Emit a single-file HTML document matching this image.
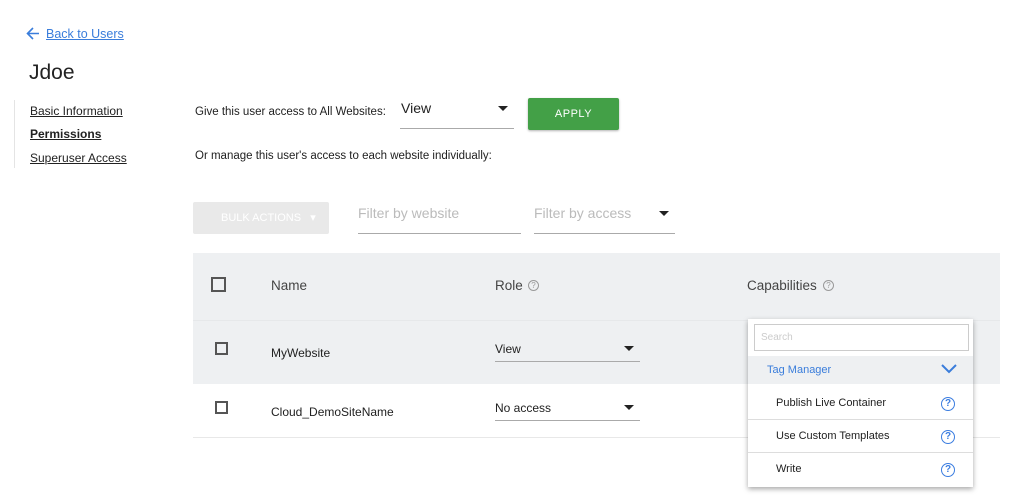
<!DOCTYPE html>
<html><head><style>
*{margin:0;padding:0;box-sizing:border-box}
body{width:1024px;height:499px;background:#fff;font-family:"Liberation Sans",sans-serif;color:#212121;position:relative;overflow:hidden;font-size:12px}
.a{position:absolute;white-space:nowrap}
.u{text-decoration:underline}
.tri{position:absolute;width:0;height:0;border-left:5px solid transparent;border-right:5px solid transparent;border-top:5px solid #222}
.cb{position:absolute;width:13px;height:13px;border:2px solid #555}
.q{position:absolute;width:14px;height:14px;border:1.5px solid #3b7de0;border-radius:50%;color:#3b7de0;font-size:10px;font-weight:bold;text-align:center;line-height:11px}
.qg{position:absolute;width:11px;height:11px;border:1px solid #999;border-radius:50%;color:#999;font-size:8px;text-align:center;line-height:9px}
</style></head><body>
<svg class="a" style="left:26px;top:27px" width="14" height="13" viewBox="0 0 14 13"><path d="M7 1L1.5 6.5L7 12M1.5 6.5H13" stroke="#3a7ddb" stroke-width="1.6" fill="none"/></svg>
<div class="a u" style="left:46px;top:27px;font-size:12.5px;color:#3a7ddb">Back to Users</div>
<div class="a" style="left:29px;top:61px;font-size:21px;color:#222">Jdoe</div>
<div class="a" style="left:14px;top:100px;width:1px;height:68px;background:#e4e4e4"></div>
<div class="a u" style="left:30px;top:104px">Basic Information</div>
<div class="a u" style="left:30px;top:127px;font-weight:bold">Permissions</div>
<div class="a u" style="left:30px;top:151px">Superuser Access</div>
<div class="a" style="left:195px;top:106px;font-size:11.5px">Give this user access to All Websites:</div>
<div class="a" style="left:401px;top:100px;font-size:14px">View</div>
<div class="tri" style="left:498px;top:106px"></div>
<div class="a" style="left:400px;top:128px;width:114px;height:1px;background:#aaa"></div>
<div class="a" style="left:528px;top:98px;width:91px;height:32px;background:#43a047;border-radius:2px;box-shadow:0 1px 2px rgba(0,0,0,.3);color:#fff;font-size:11px;text-align:center;line-height:32px;letter-spacing:.5px">APPLY</div>
<div class="a" style="left:195px;top:150px;font-size:11.5px">Or manage this user's access to each website individually:</div>
<div class="a" style="left:193px;top:202px;width:136px;height:32px;background:#e9e9e9;border-radius:2px;color:#fff;font-size:11px;line-height:32px;padding-left:28px">BULK ACTIONS &nbsp;&nbsp;▾</div>
<div class="a" style="left:358px;top:205px;font-size:14px;color:#bbb">Filter by website</div>
<div class="a" style="left:358px;top:233px;width:163px;height:1px;background:#aaa"></div>
<div class="a" style="left:534px;top:205px;font-size:14px;color:#bbb">Filter by access</div>
<div class="tri" style="left:659px;top:211px"></div>
<div class="a" style="left:534px;top:233px;width:141px;height:1px;background:#aaa"></div>
<div class="a" style="left:193px;top:253px;width:807px;height:131px;background:#eef0f2"></div>
<div class="a" style="left:193px;top:320px;width:807px;height:1px;background:#e6e8ea"></div>
<div class="a" style="left:193px;top:437px;width:807px;height:1px;background:#e8e8e8"></div>
<div class="cb" style="left:211px;top:277px;width:15px;height:15px"></div>
<div class="a" style="left:271px;top:278px;font-size:13.5px;color:#444">Name</div>
<div class="a" style="left:495px;top:278px;font-size:13.5px;color:#444">Role</div>
<div class="qg" style="left:528px;top:280px">?</div>
<div class="a" style="left:747px;top:278px;font-size:13.5px;color:#444">Capabilities</div>
<div class="qg" style="left:823px;top:280px">?</div>
<div class="cb" style="left:215px;top:342px"></div>
<div class="a" style="left:271px;top:346px">MyWebsite</div>
<div class="a" style="left:495px;top:342px">View</div>
<div class="tri" style="left:624px;top:346px"></div>
<div class="a" style="left:495px;top:361px;width:145px;height:1px;background:#aaa"></div>
<div class="cb" style="left:215px;top:401px"></div>
<div class="a" style="left:271px;top:405px">Cloud_DemoSiteName</div>
<div class="a" style="left:495px;top:401px">No access</div>
<div class="tri" style="left:624px;top:405px"></div>
<div class="a" style="left:495px;top:420px;width:145px;height:1px;background:#aaa"></div>
<div class="a" style="left:748px;top:319px;width:225px;height:168px;background:#fff;box-shadow:0 2px 5px rgba(0,0,0,.35)">
 <div class="a" style="left:6px;top:5px;width:215px;height:27px;border:1px solid #ccc;color:#ccc;font-size:10px;line-height:25px;padding-left:6px">Search</div>
 <div class="a" style="left:0;top:37px;width:225px;height:28px;background:#eef0f2;color:#3a7ddb;font-size:11px;line-height:28px;padding-left:19px">Tag Manager</div>
 <svg class="a" style="left:193px;top:45px" width="16" height="10" viewBox="0 0 16 10"><path d="M1 1L8 8L15 1" stroke="#3a7ddb" stroke-width="2" fill="none"/></svg>
 <div class="a" style="left:28px;top:78px;font-size:11px">Publish Live Container</div>
 <div class="q" style="left:193px;top:78px">?</div>
 <div class="a" style="left:0;top:100px;width:225px;height:1px;background:#ddd"></div>
 <div class="a" style="left:28px;top:111px;font-size:11px">Use Custom Templates</div>
 <div class="q" style="left:193px;top:111px">?</div>
 <div class="a" style="left:0;top:133px;width:225px;height:1px;background:#ddd"></div>
 <div class="a" style="left:28px;top:144px;font-size:11px">Write</div>
 <div class="q" style="left:193px;top:144px">?</div>
</div>
</body></html>
